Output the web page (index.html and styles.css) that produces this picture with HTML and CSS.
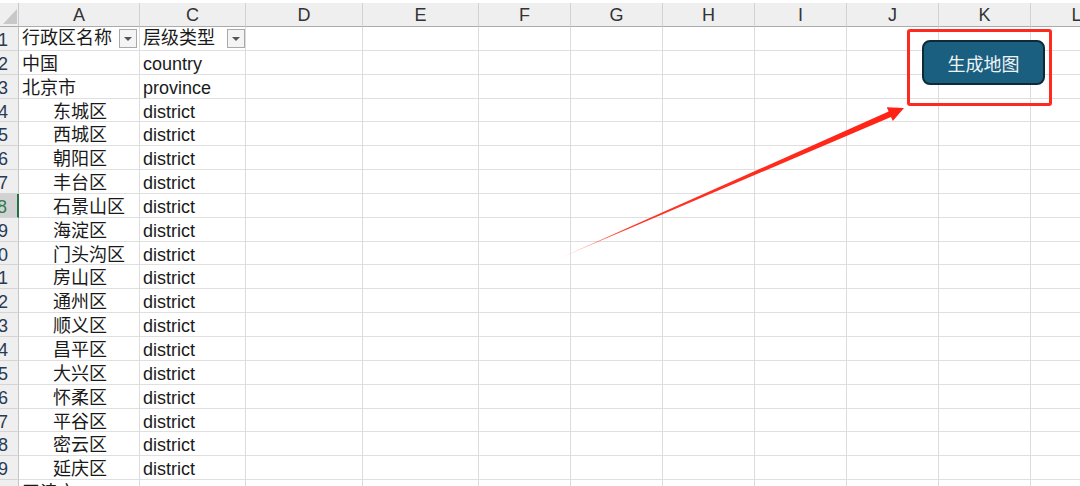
FILE: index.html
```html
<!DOCTYPE html>
<html lang="zh-CN">
<head>
<meta charset="utf-8">
<title>行政区数据</title>
<link rel="stylesheet" href="styles.css">
</head>
<body>
<div class="sheet">
  <div class="corner"><span class="tri"></span></div>
  <div class="ch">A</div><div class="ch">C</div><div class="ch">D</div><div class="ch">E</div><div class="ch">F</div><div class="ch">G</div><div class="ch">H</div><div class="ch">I</div><div class="ch">J</div><div class="ch">K</div><div class="ch">L</div>

  <div class="rh">1</div><div class="c hd">行政区名称<span class="flt fa"></span></div><div class="c hd">层级类型<span class="flt fc"></span></div><div class="c"></div><div class="c"></div><div class="c"></div><div class="c"></div><div class="c"></div><div class="c"></div><div class="c"></div><div class="c"></div><div class="c"></div>
  <div class="rh">2</div><div class="c">中国</div><div class="c">country</div><div class="c"></div><div class="c"></div><div class="c"></div><div class="c"></div><div class="c"></div><div class="c"></div><div class="c"></div><div class="c"></div><div class="c"></div>
  <div class="rh">3</div><div class="c">北京市</div><div class="c">province</div><div class="c"></div><div class="c"></div><div class="c"></div><div class="c"></div><div class="c"></div><div class="c"></div><div class="c"></div><div class="c"></div><div class="c"></div>
  <div class="rh">4</div><div class="c ind">东城区</div><div class="c">district</div><div class="c"></div><div class="c"></div><div class="c"></div><div class="c"></div><div class="c"></div><div class="c"></div><div class="c"></div><div class="c"></div><div class="c"></div>
  <div class="rh">5</div><div class="c ind">西城区</div><div class="c">district</div><div class="c"></div><div class="c"></div><div class="c"></div><div class="c"></div><div class="c"></div><div class="c"></div><div class="c"></div><div class="c"></div><div class="c"></div>
  <div class="rh">6</div><div class="c ind">朝阳区</div><div class="c">district</div><div class="c"></div><div class="c"></div><div class="c"></div><div class="c"></div><div class="c"></div><div class="c"></div><div class="c"></div><div class="c"></div><div class="c"></div>
  <div class="rh">7</div><div class="c ind">丰台区</div><div class="c">district</div><div class="c"></div><div class="c"></div><div class="c"></div><div class="c"></div><div class="c"></div><div class="c"></div><div class="c"></div><div class="c"></div><div class="c"></div>
  <div class="rh sel">8</div><div class="c ind">石景山区</div><div class="c">district</div><div class="c"></div><div class="c"></div><div class="c"></div><div class="c"></div><div class="c"></div><div class="c"></div><div class="c"></div><div class="c"></div><div class="c"></div>
  <div class="rh">9</div><div class="c ind">海淀区</div><div class="c">district</div><div class="c"></div><div class="c"></div><div class="c"></div><div class="c"></div><div class="c"></div><div class="c"></div><div class="c"></div><div class="c"></div><div class="c"></div>
  <div class="rh">10</div><div class="c ind">门头沟区</div><div class="c">district</div><div class="c"></div><div class="c"></div><div class="c"></div><div class="c"></div><div class="c"></div><div class="c"></div><div class="c"></div><div class="c"></div><div class="c"></div>
  <div class="rh">11</div><div class="c ind">房山区</div><div class="c">district</div><div class="c"></div><div class="c"></div><div class="c"></div><div class="c"></div><div class="c"></div><div class="c"></div><div class="c"></div><div class="c"></div><div class="c"></div>
  <div class="rh">12</div><div class="c ind">通州区</div><div class="c">district</div><div class="c"></div><div class="c"></div><div class="c"></div><div class="c"></div><div class="c"></div><div class="c"></div><div class="c"></div><div class="c"></div><div class="c"></div>
  <div class="rh">13</div><div class="c ind">顺义区</div><div class="c">district</div><div class="c"></div><div class="c"></div><div class="c"></div><div class="c"></div><div class="c"></div><div class="c"></div><div class="c"></div><div class="c"></div><div class="c"></div>
  <div class="rh">14</div><div class="c ind">昌平区</div><div class="c">district</div><div class="c"></div><div class="c"></div><div class="c"></div><div class="c"></div><div class="c"></div><div class="c"></div><div class="c"></div><div class="c"></div><div class="c"></div>
  <div class="rh">15</div><div class="c ind">大兴区</div><div class="c">district</div><div class="c"></div><div class="c"></div><div class="c"></div><div class="c"></div><div class="c"></div><div class="c"></div><div class="c"></div><div class="c"></div><div class="c"></div>
  <div class="rh">16</div><div class="c ind">怀柔区</div><div class="c">district</div><div class="c"></div><div class="c"></div><div class="c"></div><div class="c"></div><div class="c"></div><div class="c"></div><div class="c"></div><div class="c"></div><div class="c"></div>
  <div class="rh">17</div><div class="c ind">平谷区</div><div class="c">district</div><div class="c"></div><div class="c"></div><div class="c"></div><div class="c"></div><div class="c"></div><div class="c"></div><div class="c"></div><div class="c"></div><div class="c"></div>
  <div class="rh">18</div><div class="c ind">密云区</div><div class="c">district</div><div class="c"></div><div class="c"></div><div class="c"></div><div class="c"></div><div class="c"></div><div class="c"></div><div class="c"></div><div class="c"></div><div class="c"></div>
  <div class="rh">19</div><div class="c ind">延庆区</div><div class="c">district</div><div class="c"></div><div class="c"></div><div class="c"></div><div class="c"></div><div class="c"></div><div class="c"></div><div class="c"></div><div class="c"></div><div class="c"></div>
  <div class="rh">20</div><div class="c">天津市</div><div class="c"></div><div class="c"></div><div class="c"></div><div class="c"></div><div class="c"></div><div class="c"></div><div class="c"></div><div class="c"></div><div class="c"></div><div class="c"></div>
</div>

<div class="callout"></div>
<button class="gen-btn" type="button">生成地图</button>

<svg class="arrow" width="1080" height="486" viewBox="0 0 1080 486" xmlns="http://www.w3.org/2000/svg">
  <defs>
    <linearGradient id="ag" gradientUnits="userSpaceOnUse" x1="560" y1="258" x2="904" y2="108">
      <stop offset="0" stop-color="#ff2a1a" stop-opacity="0.25"/>
      <stop offset="0.2" stop-color="#ff2a1a" stop-opacity="0.95"/>
      <stop offset="1" stop-color="#ff2214" stop-opacity="1"/>
    </linearGradient>
  </defs>
  <polygon fill="url(#ag)" points="559,258.5 888.6,111.5 886.8,107.3 904,108 892.8,121.1 891,116.9"/>
</svg>
</body>
</html>
```

FILE: styles.css
```css
html, body {
  margin: 0;
  padding: 0;
  background: #ffffff;
  overflow: hidden;
}

body {
  width: 1080px;
  height: 486px;
  position: relative;
  font-family: "Liberation Sans", "Noto Sans CJK SC", sans-serif;
}

.sheet {
  display: grid;
  grid-template-columns: 35px 121px 106px 117px 116px repeat(7, 92px);
  grid-template-rows: 24px repeat(20, 23.85px);
  margin-left: -16px;
  margin-top: 3px;
  width: 1139px;
}

.sheet > div {
  box-sizing: border-box;
  border-right: 1px solid #dcdcdc;
  border-bottom: 1px solid #dfdfdf;
  white-space: nowrap;
  overflow: hidden;
}

.corner {
  background: #efefef;
  display: flex;
  justify-content: flex-end;
  align-items: flex-end;
  padding: 0 1px 2px 0;
  border-bottom: 1px solid #ababab !important;
  border-right: 1px solid #c9c9c9 !important;
}

.tri {
  width: 14px;
  height: 15px;
  background: #c8c8c8;
  clip-path: polygon(100% 0, 100% 100%, 0 100%);
}

.ch {
  background: #efefef;
  color: #333333;
  font-size: 18px;
  line-height: 25px;
  text-align: center;
  border-right: 1px solid #d2d2d2 !important;
  border-bottom: 1px solid #ababab !important;
}

.rh {
  background: #efefef;
  color: #293a52;
  font-size: 18px;
  line-height: 23px;
  padding-top: 2px;
  text-align: right;
  padding-right: 10px;
  border-right: 1px solid #c4c4c4 !important;
  border-bottom: 1px solid #d4d4d4 !important;
}

.rh.sel {
  background: #d2d2d2;
  color: #2e7d4f;
  border-right: 2px solid #217346 !important;
}

.c {
  font-size: 18px;
  line-height: 23px;
  padding-top: 2px;
  color: #1a1a1a;
  padding-left: 3px;
}

.c.ind {
  padding-left: 34px;
}

.c.hd {
  display: flex;
  align-items: center;
  justify-content: space-between;
  padding-top: 1px;
}

.flt {
  box-sizing: border-box;
  width: 18px;
  height: 19px;
  border: 1px solid #a9a9a9;
  background: #f4f4f4;
  display: flex;
  align-items: center;
  justify-content: center;
}

.flt::after {
  content: "";
  width: 0;
  height: 0;
  border-left: 4px solid transparent;
  border-right: 4px solid transparent;
  border-top: 4px solid #555555;
}

.flt.fa {
  margin-right: 2px;
}

.flt.fc {
  margin-right: 0;
}

.callout {
  position: absolute;
  left: 907px;
  top: 29px;
  width: 145px;
  height: 77px;
  box-sizing: border-box;
  border: 3px solid #ff2a1f;
  border-radius: 3px;
}

.gen-btn {
  position: absolute;
  left: 922px;
  top: 40px;
  width: 123px;
  height: 45px;
  box-sizing: border-box;
  border: 2px solid #0e2a39;
  border-radius: 8px;
  background: #1b5f80;
  color: #eef3f6;
  font-family: "Noto Sans CJK SC", sans-serif;
  font-size: 18px;
  padding: 0;
  margin: 0;
}

.arrow {
  position: absolute;
  left: 0;
  top: 0;
  pointer-events: none;
}
```
